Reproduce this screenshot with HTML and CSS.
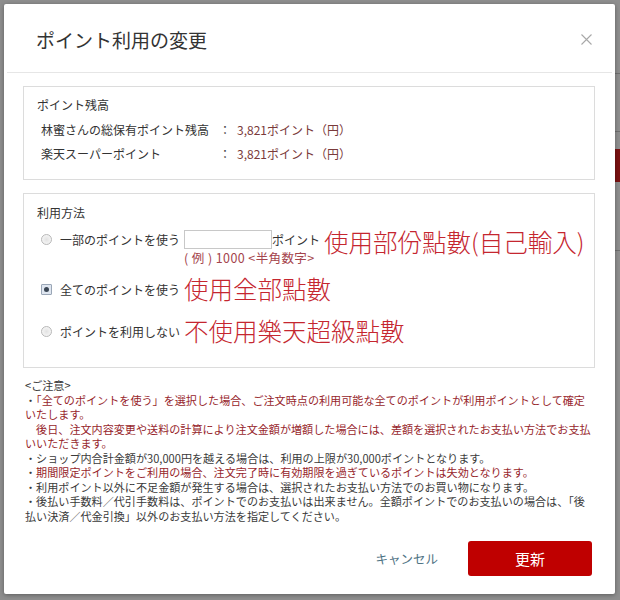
FILE: index.html
```html
<!DOCTYPE html>
<html lang="ja">
<head>
<meta charset="utf-8">
<title>ポイント利用の変更</title>
<link rel="stylesheet" href="styles.css">
</head>
<body>
<div class="page">
  <div class="page-red"></div>
  <div class="page-line l1"></div>
  <div class="page-line l2"></div>
  <div class="page-line l3"></div>
</div>
<div class="modal">
  <div class="modal-head">
    <h1 class="modal-title">ポイント利用の変更</h1>
    <button class="close" aria-label="閉じる">
      <svg width="11" height="11" viewBox="0 0 11 11"><path d="M0.5 0.5 L10.5 10.5 M10.5 0.5 L0.5 10.5" stroke="#a8a8a8" stroke-width="1.1" fill="none"/></svg>
    </button>
  </div>
  <div class="modal-body">
    <section class="box balance">
      <div class="box-title">ポイント残高</div>
      <div class="row first"><span class="lbl">林蜜さんの総保有ポイント残高</span><span class="colon">：</span><span class="val">3,821ポイント（円）</span></div>
      <div class="row"><span class="lbl">楽天スーパーポイント</span><span class="colon">：</span><span class="val">3,821ポイント（円）</span></div>
    </section>
    <section class="box method">
      <div class="box-title">利用方法</div>
      <div class="opt opt1">
        <span class="radio"></span>
        <span class="opt-label">一部のポイントを使う</span>
        <span class="input-col">
          <input class="pt-input" type="text">
          <span class="hint">(&nbsp;例&nbsp;) 1000 &lt;半角数字&gt;</span>
        </span>
        <span class="unit">ポイント</span>
        <span class="note-red">使用部份點數(自己輸入)</span>
      </div>
      <div class="opt opt2">
        <span class="radio checked"></span>
        <span class="opt-label">全てのポイントを使う</span>
        <span class="note-red">使用全部點數</span>
      </div>
      <div class="opt opt3">
        <span class="radio"></span>
        <span class="opt-label">ポイントを利用しない</span>
        <span class="note-red">不使用樂天超級點數</span>
      </div>
    </section>
    <div class="notes">
      <div>&lt;ご注意&gt;</div>
      <div><span class="dark">・</span><span class="red">「全てのポイントを使う」を選択した場合、ご注文時点の利用可能な全てのポイントが利用ポイントとして確定</span></div>
      <div class="red">いたします。</div>
      <div class="red">　後日、注文内容変更や送料の計算により注文金額が増額した場合には、差額を選択されたお支払い方法でお支払</div>
      <div class="red">いいただきます。</div>
      <div>・ショップ内合計金額が30,000円を越える場合は、利用の上限が30,000ポイントとなります。</div>
      <div><span class="dark">・</span><span class="red">期間限定ポイントをご利用の場合、注文完了時に有効期限を過ぎているポイントは失効となります。</span></div>
      <div>・利用ポイント以外に不足金額が発生する場合は、選択されたお支払い方法でのお買い物になります。</div>
      <div>・後払い手数料／代引手数料は、ポイントでのお支払いは出来ません。全額ポイントでのお支払いの場合は、「後</div>
      <div>払い決済／代金引換」以外のお支払い方法を指定してください。</div>
    </div>
  </div>
  <div class="modal-foot">
    <button class="cancel">キャンセル</button>
    <button class="update">更新</button>
  </div>
</div>
</body>
</html>
```
FILE: styles.css
```css
html, body {
  margin: 0;
  padding: 0;
}
body {
  width: 620px;
  height: 600px;
  overflow: hidden;
  background: #8c8c8c;
  font-family: "Noto Sans CJK JP", "Noto Sans", sans-serif;
  color: #333;
  position: relative;
}
.page {
  width: 620px;
  height: 600px;
  background: #8e8e8e;
  position: relative;
}
.page-red {
  position: absolute;
  left: 612px;
  top: 149px;
  width: 8px;
  height: 33px;
  background: #7a1212;
}
.page-line {
  position: absolute;
  left: 612px;
  width: 8px;
  height: 1px;
  background: #6f6f6f;
}
.page-line.l1 { top: 73px; }
.page-line.l2 { top: 131px; }
.page-line.l3 { top: 250px; }

.modal {
  position: absolute;
  left: 4px;
  top: 4px;
  width: 611px;
  height: 590px;
  background: #fff;
  border-radius: 2px;
  box-shadow: 0 1px 4px rgba(0,0,0,0.35);
  display: flex;
  flex-direction: column;
  box-sizing: border-box;
}
.modal-head {
  height: 69px;
  margin: 0 3px;
  box-sizing: border-box;
  padding: 4px 20px 0 29px;
  border-bottom: 1px solid #e6e6e6;
  display: flex;
  align-items: center;
  justify-content: space-between;
}
.modal-title {
  margin: 0;
  font-size: 19px;
  font-weight: normal;
  line-height: 24px;
  color: #333;
}
.close {
  border: 0;
  background: none;
  padding: 0;
  width: 11px;
  height: 11px;
  display: flex;
  margin-top: -2px;
}
.modal-body {
  padding: 13px 20px 0 19px;
}
.box {
  border: 1px solid #dcdcdc;
  padding: 9px 13px 13px;
  font-size: 12px;
}
.box-title {
  line-height: 18px;
  font-size: 12px;
  color: #333;
}
.balance .row {
  line-height: 24px;
  padding-left: 4px;
  display: flex;
  white-space: nowrap;
}
.balance .row.first {
  margin-top: 4px;
}
.lbl {
  width: 178px;
  color: #333;
}
.colon {
  width: 12px;
  margin-right: 6px;
  color: #444;
}
.val {
  color: #7a3a3a;
}
.method {
  margin-top: 13px;
  padding: 10px 13px 22px;
}
.opt {
  display: flex;
  white-space: nowrap;
}
.opt1 {
  margin-top: 8px;
  align-items: flex-start;
  height: 33px;
}
.opt2 {
  margin-top: 12px;
  align-items: center;
  height: 28px;
}
.opt3 {
  margin-top: 14px;
  align-items: center;
  height: 28px;
}
.radio {
  width: 11px;
  height: 11px;
  margin-left: 4px;
  box-sizing: border-box;
  border-radius: 50%;
  border: 1px solid #b8b8b8;
  background: radial-gradient(circle at 50% 50%, #e2e2e2 0, #f4f4f4 70%);
  flex: none;
}
.opt1 .radio {
  margin-top: 4px;
}
.radio.checked {
  border-radius: 1px;
  border: 1px solid #9aa6b6;
  background: #dfe6f0;
  position: relative;
}
.radio.checked::after {
  content: "";
  position: absolute;
  left: 2px;
  top: 2px;
  width: 5px;
  height: 5px;
  border-radius: 50%;
  background: #3a4654;
}
.opt-label {
  margin-left: 8px;
  line-height: 19px;
  font-size: 12px;
  color: #333;
}
.input-col {
  display: flex;
  flex-direction: column;
  margin-left: 4px;
  width: 88px;
  flex: none;
}
.pt-input {
  width: 88px;
  height: 19px;
  box-sizing: border-box;
  border: 1px solid #c8c8c8;
  margin: 0;
  padding: 0 3px;
  font-size: 12px;
  outline: none;
}
.hint {
  margin-top: 2px;
  line-height: 13px;
  font-size: 12.5px;
  letter-spacing: 0.4px;
  color: #a4444c;
  white-space: nowrap;
  width: 88px;
  overflow: visible;
}
.unit {
  line-height: 19px;
  height: 19px;
  font-size: 12px;
  color: #333;
}
.note-red {
  font-family: "Noto Sans CJK TC", "Noto Sans CJK JP", sans-serif;
  font-size: 24.5px;
  font-weight: 300;
  line-height: 24px;
  color: #c5262f;
  margin-left: 4px;
}
.notes {
  margin-top: 10px;
  padding-left: 2px;
  font-size: 11.1px;
  line-height: 14.5px;
  color: #3a3a3a;
  white-space: nowrap;
}
.notes .red {
  color: #97262c;
}
.notes .dark {
  color: #3a3a3a;
}
.modal-foot {
  margin-top: auto;
  display: flex;
  justify-content: flex-end;
  align-items: center;
  padding: 0 23px 18px 0;
}
.cancel {
  border: 0;
  background: none;
  padding: 0;
  margin-right: 30px;
  font-family: "Noto Sans CJK JP", sans-serif;
  font-size: 12.5px;
  color: #4f7384;
}
.update {
  width: 124px;
  height: 35px;
  border: 0;
  border-radius: 3px;
  background: #bf0000;
  color: #fff;
  font-family: "Noto Sans CJK JP", sans-serif;
  font-size: 15px;
  padding: 0;
}
```
